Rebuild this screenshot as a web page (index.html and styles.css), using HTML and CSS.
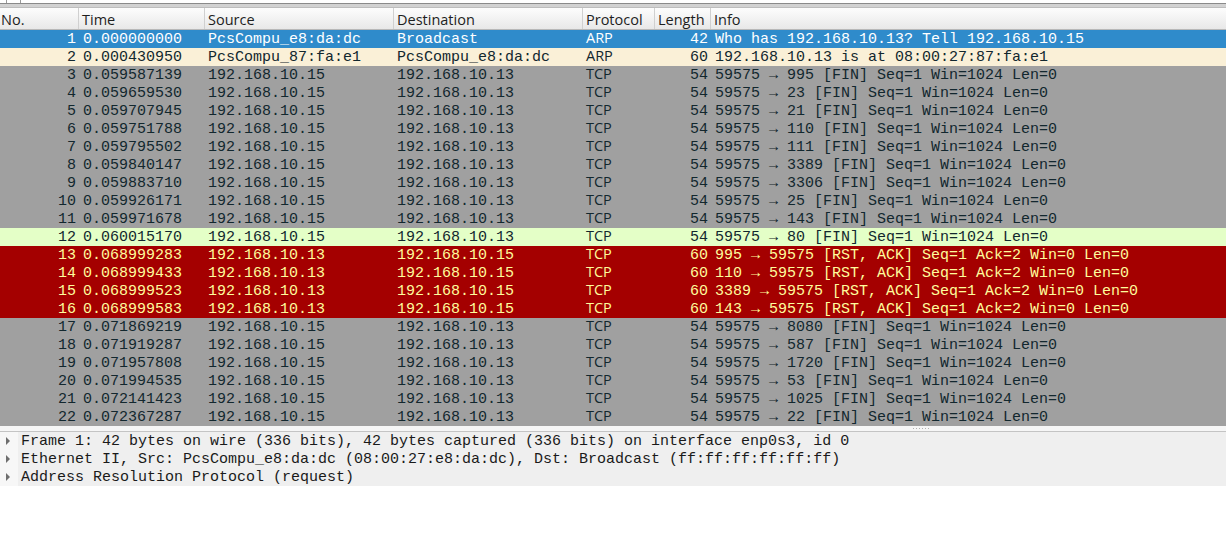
FILE: index.html
```html
<!DOCTYPE html>
<html>
<head>
<meta charset="utf-8">
<link rel="stylesheet" href="styles.css">
</head>
<body>
<div class="app">
  <div class="filterbar"><span class="fb-a"></span><span class="fb-b"></span></div>
  <div class="filtergap"></div>
  <div class="list">
    <div class="row head">
      <div class="c">No.</div><div class="c">Time</div><div class="c">Source</div><div class="c">Destination</div><div class="c">Protocol</div><div class="c">Length</div><div class="c">Info</div>
    </div>
    <div class="row sel"><div class="c num">1</div><div class="c">0.000000000</div><div class="c">PcsCompu_e8:da:dc</div><div class="c">Broadcast</div><div class="c proto">ARP</div><div class="c num">42</div><div class="c">Who has 192.168.10.13? Tell 192.168.10.15</div></div>
    <div class="row arp"><div class="c num">2</div><div class="c">0.000430950</div><div class="c">PcsCompu_87:fa:e1</div><div class="c">PcsCompu_e8:da:dc</div><div class="c proto">ARP</div><div class="c num">60</div><div class="c">192.168.10.13 is at 08:00:27:87:fa:e1</div></div>
    <div class="row gray"><div class="c num">3</div><div class="c">0.059587139</div><div class="c">192.168.10.15</div><div class="c">192.168.10.13</div><div class="c proto">TCP</div><div class="c num">54</div><div class="c">59575 → 995 [FIN] Seq=1 Win=1024 Len=0</div></div>
    <div class="row gray"><div class="c num">4</div><div class="c">0.059659530</div><div class="c">192.168.10.15</div><div class="c">192.168.10.13</div><div class="c proto">TCP</div><div class="c num">54</div><div class="c">59575 → 23 [FIN] Seq=1 Win=1024 Len=0</div></div>
    <div class="row gray"><div class="c num">5</div><div class="c">0.059707945</div><div class="c">192.168.10.15</div><div class="c">192.168.10.13</div><div class="c proto">TCP</div><div class="c num">54</div><div class="c">59575 → 21 [FIN] Seq=1 Win=1024 Len=0</div></div>
    <div class="row gray"><div class="c num">6</div><div class="c">0.059751788</div><div class="c">192.168.10.15</div><div class="c">192.168.10.13</div><div class="c proto">TCP</div><div class="c num">54</div><div class="c">59575 → 110 [FIN] Seq=1 Win=1024 Len=0</div></div>
    <div class="row gray"><div class="c num">7</div><div class="c">0.059795502</div><div class="c">192.168.10.15</div><div class="c">192.168.10.13</div><div class="c proto">TCP</div><div class="c num">54</div><div class="c">59575 → 111 [FIN] Seq=1 Win=1024 Len=0</div></div>
    <div class="row gray"><div class="c num">8</div><div class="c">0.059840147</div><div class="c">192.168.10.15</div><div class="c">192.168.10.13</div><div class="c proto">TCP</div><div class="c num">54</div><div class="c">59575 → 3389 [FIN] Seq=1 Win=1024 Len=0</div></div>
    <div class="row gray"><div class="c num">9</div><div class="c">0.059883710</div><div class="c">192.168.10.15</div><div class="c">192.168.10.13</div><div class="c proto">TCP</div><div class="c num">54</div><div class="c">59575 → 3306 [FIN] Seq=1 Win=1024 Len=0</div></div>
    <div class="row gray"><div class="c num">10</div><div class="c">0.059926171</div><div class="c">192.168.10.15</div><div class="c">192.168.10.13</div><div class="c proto">TCP</div><div class="c num">54</div><div class="c">59575 → 25 [FIN] Seq=1 Win=1024 Len=0</div></div>
    <div class="row gray"><div class="c num">11</div><div class="c">0.059971678</div><div class="c">192.168.10.15</div><div class="c">192.168.10.13</div><div class="c proto">TCP</div><div class="c num">54</div><div class="c">59575 → 143 [FIN] Seq=1 Win=1024 Len=0</div></div>
    <div class="row green"><div class="c num">12</div><div class="c">0.060015170</div><div class="c">192.168.10.15</div><div class="c">192.168.10.13</div><div class="c proto">TCP</div><div class="c num">54</div><div class="c">59575 → 80 [FIN] Seq=1 Win=1024 Len=0</div></div>
    <div class="row red"><div class="c num">13</div><div class="c">0.068999283</div><div class="c">192.168.10.13</div><div class="c">192.168.10.15</div><div class="c proto">TCP</div><div class="c num">60</div><div class="c">995 → 59575 [RST, ACK] Seq=1 Ack=2 Win=0 Len=0</div></div>
    <div class="row red"><div class="c num">14</div><div class="c">0.068999433</div><div class="c">192.168.10.13</div><div class="c">192.168.10.15</div><div class="c proto">TCP</div><div class="c num">60</div><div class="c">110 → 59575 [RST, ACK] Seq=1 Ack=2 Win=0 Len=0</div></div>
    <div class="row red"><div class="c num">15</div><div class="c">0.068999523</div><div class="c">192.168.10.13</div><div class="c">192.168.10.15</div><div class="c proto">TCP</div><div class="c num">60</div><div class="c">3389 → 59575 [RST, ACK] Seq=1 Ack=2 Win=0 Len=0</div></div>
    <div class="row red"><div class="c num">16</div><div class="c">0.068999583</div><div class="c">192.168.10.13</div><div class="c">192.168.10.15</div><div class="c proto">TCP</div><div class="c num">60</div><div class="c">143 → 59575 [RST, ACK] Seq=1 Ack=2 Win=0 Len=0</div></div>
    <div class="row gray"><div class="c num">17</div><div class="c">0.071869219</div><div class="c">192.168.10.15</div><div class="c">192.168.10.13</div><div class="c proto">TCP</div><div class="c num">54</div><div class="c">59575 → 8080 [FIN] Seq=1 Win=1024 Len=0</div></div>
    <div class="row gray"><div class="c num">18</div><div class="c">0.071919287</div><div class="c">192.168.10.15</div><div class="c">192.168.10.13</div><div class="c proto">TCP</div><div class="c num">54</div><div class="c">59575 → 587 [FIN] Seq=1 Win=1024 Len=0</div></div>
    <div class="row gray"><div class="c num">19</div><div class="c">0.071957808</div><div class="c">192.168.10.15</div><div class="c">192.168.10.13</div><div class="c proto">TCP</div><div class="c num">54</div><div class="c">59575 → 1720 [FIN] Seq=1 Win=1024 Len=0</div></div>
    <div class="row gray"><div class="c num">20</div><div class="c">0.071994535</div><div class="c">192.168.10.15</div><div class="c">192.168.10.13</div><div class="c proto">TCP</div><div class="c num">54</div><div class="c">59575 → 53 [FIN] Seq=1 Win=1024 Len=0</div></div>
    <div class="row gray"><div class="c num">21</div><div class="c">0.072141423</div><div class="c">192.168.10.15</div><div class="c">192.168.10.13</div><div class="c proto">TCP</div><div class="c num">54</div><div class="c">59575 → 1025 [FIN] Seq=1 Win=1024 Len=0</div></div>
    <div class="row gray"><div class="c num">22</div><div class="c">0.072367287</div><div class="c">192.168.10.15</div><div class="c">192.168.10.13</div><div class="c proto">TCP</div><div class="c num">54</div><div class="c">59575 → 22 [FIN] Seq=1 Win=1024 Len=0</div></div>
  </div>
  <div class="splitter"><span class="grip"></span></div>
  <div class="details">
    <div class="drow"><span class="arrow"></span><span class="dtext">Frame 1: 42 bytes on wire (336 bits), 42 bytes captured (336 bits) on interface enp0s3, id 0</span></div>
    <div class="drow"><span class="arrow"></span><span class="dtext">Ethernet II, Src: PcsCompu_e8:da:dc (08:00:27:e8:da:dc), Dst: Broadcast (ff:ff:ff:ff:ff:ff)</span></div>
    <div class="drow"><span class="arrow"></span><span class="dtext">Address Resolution Protocol (request)</span></div>
  </div>
</div>
</body>
</html>
```
FILE: styles.css
```css
* { box-sizing: border-box; }
html, body { margin: 0; padding: 0; background: #ffffff; }
body { width: 1226px; height: 534px; overflow: hidden; }

.app { display: flex; flex-direction: column; }

.filterbar {
  background: #ffffff;
  border-bottom: 1px solid #8a8a8a;
  position: relative;
  height: 4px;
}
.fb-a, .fb-b { position: absolute; top: 0; width: 1px; height: 3px; background: #9a9a9a; }
.fb-a { left: 6px; }
.fb-b { left: 20px; }

.filtergap {
  height: 4px;
  background: #d2d2d2;
  border-bottom: 1px solid #bdbdbd;
}

.list { display: flex; flex-direction: column; }

.row {
  display: grid;
  grid-template-columns: 78px 126px 189px 189px 72px 56px 1fr;
  height: 18px;
  line-height: 20px;
  font-family: "Liberation Mono", monospace;
  font-size: 15px;
  white-space: nowrap;
  color: #12272e;
}
.c { padding-left: 5px; overflow: hidden; height: 18px; }
.c:nth-child(3), .c:nth-child(4), .c:nth-child(5) { padding-left: 4px; }
.num { text-align: right; padding-left: 0; padding-right: 2px; }
.proto { font-family: "Open Sans", "Noto Sans", sans-serif; font-size: 14.5px; line-height: 16px; overflow: visible; }

.head {
  height: 22px;
  font-family: "Open Sans", "Noto Sans", sans-serif;
  font-size: 14.5px;
  color: #1e1e1e;
  background: linear-gradient(#fdfdfd, #e8e8e8);
  border-bottom: 1px solid #b8b8b8;
}
.head .c { border-left: 1px solid #d0d0d0; padding-left: 3px; height: 21px; line-height: 23px; overflow: visible; }
.head .c:first-child { border-left: none; padding-left: 1px; }

.sel { background: #2f8bcb; color: #ffffff; }
.arp { background: #faf0d7; }
.gray { background: #a0a0a0; }
.green { background: #e4ffc7; }
.red { background: #a40000; color: #fffc9c; }

.splitter {
  height: 6px;
  background: #f6f6f6;
  border-bottom: 1px solid #c4c4c4;
  position: relative;
}
.grip {
  position: absolute;
  left: 913px;
  top: 2px;
  width: 16px;
  height: 1px;
  background: repeating-linear-gradient(90deg, #b0b0b0 0 1px, transparent 1px 3px);
}

.details {
  display: flex;
  flex-direction: column;
  background: #f7f7f7;
}
.drow {
  display: flex;
  height: 18px;
  line-height: 19px;
  font-family: "Liberation Mono", monospace;
  font-size: 15px;
  color: #1a1a1a;
  white-space: nowrap;
}
.arrow {
  width: 18px;
  flex: none;
  display: flex;
  align-items: center;
  padding-left: 6px;
}
.arrow::before {
  content: "";
  display: block;
  border-left: 4px solid #6e6e6e;
  border-top: 4px solid transparent;
  border-bottom: 4px solid transparent;
}
.dtext { flex: 1; background: #efefef; padding-left: 3px; }
```
